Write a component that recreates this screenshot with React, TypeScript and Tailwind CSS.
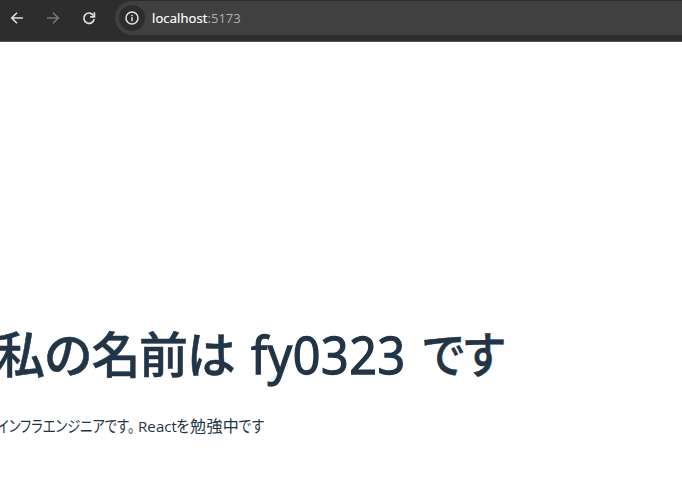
function BrowserBar() {
  return (
    <header className="flex h-[42px] w-full items-start border-b border-[#535353] bg-[#2d2d2d]">
      <div className="flex h-9 w-[115px] shrink-0 items-center gap-5 pl-[9px] text-[#dedede]">
        <svg className="size-4 shrink-0" viewBox="0 0 16 16" fill="none" stroke="currentColor" strokeWidth="1.6">
          <path d="M14 8H3M8 2.7 2.7 8 8 13.3" />
        </svg>
        <svg className="size-4 shrink-0 text-[#777777]" viewBox="0 0 16 16" fill="none" stroke="currentColor" strokeWidth="1.6">
          <path d="M2 8h11M8 2.7 13.3 8 8 13.3" />
        </svg>
        <svg className="size-4 shrink-0" viewBox="0 0 16 16" fill="none" stroke="currentColor" strokeWidth="1.7">
          <path d="M12.6 5.6A5.2 5.2 0 1 0 13.2 9.2" />
          <path d="M13.4 2.2v4.7H9.2" />
        </svg>
      </div>
      <div className="mt-px flex h-[34px] flex-1 items-center rounded-l-full bg-[#404040] pl-1">
        <div className="flex size-[26px] items-center justify-center rounded-full bg-[#2d2d2d] text-[#e3e3e3]">
          <svg className="size-4" viewBox="0 0 16 16" fill="none" stroke="currentColor" strokeWidth="1.5">
            <circle cx="8" cy="8" r="6" />
            <path d="M8 7.3v4M8 4.7v1.5" />
          </svg>
        </div>
        <p className="ml-[7px] font-['Open_Sans',sans-serif] text-[13px] leading-5 text-[#b0b0b0]">
          <span className="tracking-[0.12px] text-white [-webkit-text-stroke:0.2px]">localhost</span>
          <span>:5173</span>
        </p>
      </div>
    </header>
  );
}

export default function App() {
  return (
    <div className="h-[481px] w-full overflow-hidden bg-white text-[#213547]">
      <BrowserBar />
      <main className="pt-[284px] font-['Open_Sans','Noto_Sans_CJK_JP',sans-serif]">
        <h1 className="flex h-[56px] items-center text-[49px] leading-[56px] font-medium whitespace-nowrap [-webkit-text-stroke:0.5px]">
          <span className="-ml-[4px] w-[255px] shrink-0 tracking-[-1.3px]">私の名前は</span>
          <span className="w-[170px] shrink-0">
            <span className="inline-block origin-left scale-x-[0.95] text-[51px] tracking-[0.6px] [-webkit-text-stroke:1.4px]">fy0323</span>
          </span>
          <span className="origin-left scale-x-[0.92] tracking-[-5px]">です</span>
        </h1>
        <p className="mt-[32px] flex h-6 items-center text-base leading-6 whitespace-nowrap">
          <span className="-ml-[3px] w-[141px] shrink-0">
            <span className="inline-block origin-left scale-x-[0.83] [font-feature-settings:'palt']">インフラエンジニアです。</span>
          </span>
          <span className="w-[38px] shrink-0 text-[15px] tracking-[0.1px]">React</span>
          <span className="w-[14px] shrink-0">
            <span className="inline-block origin-left scale-x-[0.88]">を</span>
          </span>
          <span className="w-[48px] shrink-0 tracking-[0.4px]">勉強中</span>
          <span className="origin-left scale-x-[0.86] tracking-[-1px]">です</span>
        </p>
      </main>
    </div>
  );
}
